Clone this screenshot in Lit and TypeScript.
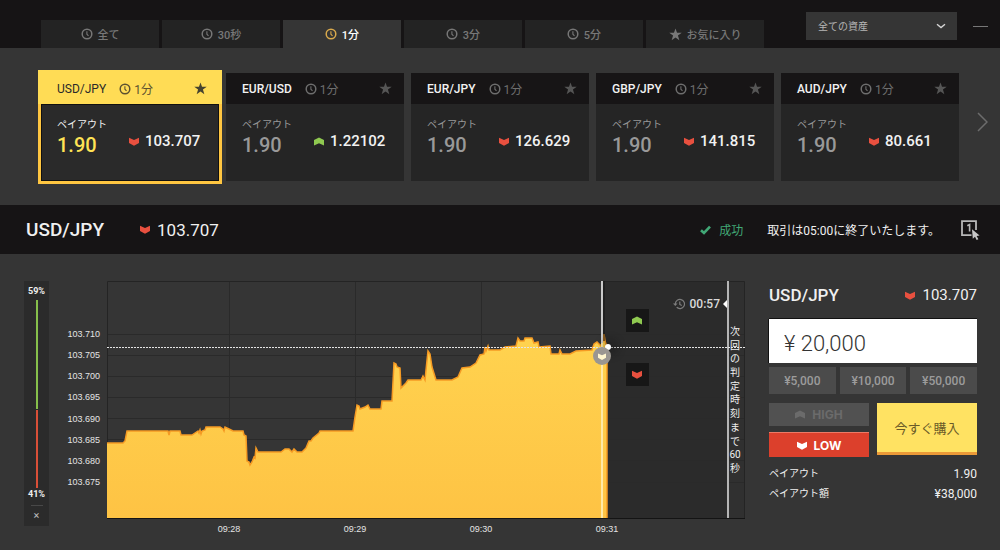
import { LitElement, html, svg, css } from "lit";
import { customElement, property, state } from "lit/decorators.js";
import { classMap } from "lit/directives/class-map.js";

const clockIcon = html`<svg class="clock" viewBox="0 0 12 12" aria-hidden="true">
  <circle cx="6" cy="6" r="4.8" fill="none" stroke="currentColor" stroke-width="1.5" />
  <path d="M5.9 3.2V6.2L7.5 7.9" fill="none" stroke="currentColor" stroke-width="1.1" />
</svg>`;

const starIcon = html`<svg class="star" viewBox="0 0 24 24" aria-hidden="true">
  <path fill="currentColor" d="M12 .8l2.8 8.1h8.7l-7 5.1 2.6 8.4-7.1-5-7.1 5L7.5 14l-7-5.1h8.7z" />
</svg>`;

const arrowIcon = (dir: string) => html`<svg class="arrow ${dir}" viewBox="0 0 10 9" aria-hidden="true">
  <path
    fill="currentColor"
    d=${dir === "up" ? "M0 8.4V3L5 .4l5 2.6v5.4L5 6.2z" : "M0 .8l5 2.2 5-2.2v5.2L5 8.8 0 6z"}
  />
</svg>`;

interface Pair {
  name: string;
  price: string;
  dir: "up" | "down";
}

const PAIRS: Pair[] = [
  { name: "USD/JPY", price: "103.707", dir: "down" },
  { name: "EUR/USD", price: "1.22102", dir: "up" },
  { name: "EUR/JPY", price: "126.629", dir: "down" },
  { name: "GBP/JPY", price: "141.815", dir: "down" },
  { name: "AUD/JPY", price: "80.661", dir: "down" },
];

const TABS = ["全て", "30秒", "1分", "3分", "5分", "お気に入り"];

const shared = css`
  * {
    box-sizing: border-box;
  }
  button,
  input,
  select {
    font: inherit;
    color: inherit;
    border: 0;
    margin: 0;
    padding: 0;
    border-radius: 0;
    background: none;
  }
  .clock {
    width: 12px;
    height: 12px;
    flex: none;
  }
  .star {
    width: 13px;
    height: 13px;
    flex: none;
  }
  .arrow {
    width: 10px;
    height: 9px;
    flex: none;
  }
  .up {
    color: #8fc950;
  }
  .down {
    color: #e8503f;
  }
`;

@customElement("pair-card")
export class PairCard extends LitElement {
  @property({ attribute: false }) pair!: Pair;
  @property({ type: Boolean, reflect: true }) selected = false;

  static styles = [
    shared,
    css`
      :host {
        display: block;
        background: #252525;
        color: #f2f2f2;
      }
      :host([selected]) {
        background: #2a2a2a;
        box-shadow: 0 0 0 3px #ffc641;
      }
      .head {
        display: flex;
        align-items: center;
        height: 31px;
        padding: 0 12px 0 16px;
        background: #171516;
      }
      .name {
        flex: none;
        font-size: 12px;
        font-weight: 500;
      }
      .term {
        display: flex;
        align-items: center;
        gap: 3px;
        margin-left: 13px;
        font-size: 12px;
        color: #6e6e6e;
      }
      .fav {
        display: flex;
        margin-left: auto;
        color: #555;
      }
      .body {
        display: grid;
        grid-template-columns: 72px 1fr;
        height: 77px;
        padding: 14px 16px 0;
      }
      .label {
        font-size: 10px;
        line-height: 14px;
        color: #999;
      }
      .payout {
        font-size: 20px;
        line-height: 26px;
        font-weight: 500;
        color: #999;
      }
      .price {
        display: flex;
        align-items: center;
        gap: 6px;
        height: 46px;
        font-size: 15px;
        font-weight: 500;
      }
      :host([selected]) .head {
        background: #ffdc55;
        box-shadow: 0 -3px #ffdc55, -3px 0 #ffdc55, 3px 0 #ffdc55, -3px -3px #ffdc55, 3px -3px #ffdc55;
        color: #2a2a2a;
      }
      :host([selected]) .name {
        font-weight: 400;
      }
      :host([selected]) .term {
        color: #5c5130;
      }
      :host([selected]) .fav {
        color: #46432f;
      }
      :host([selected]) .body {
        box-shadow: inset 0 0 0 1px #111;
      }
      :host([selected]) .label {
        color: #f2f2f2;
      }
      :host([selected]) .payout {
        color: #ffe355;
      }
    `,
  ];

  render() {
    return html`
      <div class="head">
        <span class="name">${this.pair.name}</span>
        <span class="term">${clockIcon}<span>1分</span></span>
        <button class="fav" aria-label="お気に入り">${starIcon}</button>
      </div>
      <div class="body">
        <div>
          <div class="label">ペイアウト</div>
          <div class="payout">1.90</div>
        </div>
        <div class="price">${arrowIcon(this.pair.dir)}<span>${this.pair.price}</span></div>
      </div>
    `;
  }
}

// Price samples as [x, y] in the plot's 638 x 238 space.
const SERIES: number[][] = [
  [0, 162], [16, 162], [18, 160], [20, 150], [61, 150], [62, 154], [63, 150], [73, 150], [74, 154], [85, 154],
  [91, 150], [92, 152], [93, 149], [94, 153], [95, 150], [98, 149], [99, 146], [113, 146], [116, 148], [117, 150],
  [118, 146], [122, 148], [126, 150], [136, 150], [137, 154], [139, 155], [140, 180], [142, 181], [143, 184],
  [145, 181], [147, 176], [148, 177], [149, 167], [151, 171], [174, 171], [178, 168], [182, 168], [185, 171],
  [187, 168], [190, 171], [195, 171], [199, 167], [202, 160], [204, 160], [206, 157], [212, 152], [213, 150],
  [246, 150], [248, 136], [250, 124], [252, 125], [253, 128], [258, 126], [261, 124], [263, 128], [274, 128],
  [275, 120], [285, 120], [287, 82], [289, 83], [290, 86], [293, 87], [294, 107], [299, 102], [301, 99], [314, 99],
  [316, 95], [318, 99], [319, 89], [321, 70], [323, 73], [325, 86], [329, 99], [345, 99], [351, 96], [355, 87],
  [363, 86], [369, 82], [373, 74], [377, 73], [378, 66], [379, 70], [381, 65], [382, 69], [393, 69], [398, 66],
  [409, 65], [411, 57], [413, 60], [417, 60], [418, 57], [425, 57], [427, 62], [431, 61], [432, 66], [443, 65],
  [444, 73], [452, 73], [453, 69], [455, 73], [463, 73], [469, 70], [485, 69], [487, 63], [490, 61], [494, 65],
  [496, 60], [497, 53], [498, 60], [500, 66],
];

@customElement("price-chart")
export class PriceChart extends LitElement {
  static styles = [
    shared,
    css`
      :host {
        display: grid;
        grid-template-columns: 51px minmax(0, 1fr);
        column-gap: 7px;
        color: #c6c6c6;
      }
      .prices {
        display: flex;
        flex-direction: column;
        justify-content: space-between;
        height: 160px;
        margin-top: 47px;
        text-align: right;
        font: 9px/12px "Liberation Sans", Arial, sans-serif;
        color: #e4e4e4;
      }
      .plot {
        position: relative;
        height: 238px;
      }
      .canvas {
        display: block;
        width: 100%;
        height: 100%;
      }
      .times {
        grid-column: 2;
        display: grid;
        grid-template-columns: repeat(4, 1fr);
        width: 79%;
        margin: 4px 0 0 9.25%;
        text-align: center;
        font: 9px/12px "Liberation Sans", Arial, sans-serif;
        color: #e4e4e4;
      }
      .rate {
        position: absolute;
        top: 66px;
        left: 0;
        right: 0;
        height: 1px;
        background: repeating-linear-gradient(90deg, #e4e4e4 0 2px, transparent 2px 3px);
      }
      .dot {
        position: absolute;
        top: 63px;
        left: 78.5%;
        width: 6px;
        height: 6px;
        margin-left: -3px;
        border-radius: 50%;
        background: #fff;
        box-shadow: 2px 0 8px 4px #1116;
      }
      .entry {
        position: absolute;
        top: 66px;
        left: 77.6%;
        display: grid;
        place-items: center;
        width: 18px;
        height: 18px;
        margin-left: -9px;
        border-radius: 50%;
        background: #9a9691;
      }
      .entry .arrow {
        color: #fff6cf;
        width: 8px;
      }
      .trade {
        position: absolute;
        left: 81.3%;
        display: grid;
        place-items: center;
        width: 23px;
        height: 23px;
        background: #171717;
      }
      .trade.high {
        top: 28px;
      }
      .trade.low {
        top: 82px;
      }
      .countdown {
        position: absolute;
        top: 15px;
        right: 18px;
        display: flex;
        align-items: center;
        font-size: 12px;
        line-height: 16px;
        font-weight: 500;
        color: #dadada;
      }
      .history {
        width: 12px;
        height: 12px;
        margin-right: 5px;
      }
      .tip {
        margin-left: 3px;
        border: 4px solid transparent;
        border-left-width: 0;
        border-right-color: #fff;
      }
      .deadline {
        position: absolute;
        top: 44px;
        right: 3px;
        display: flex;
        flex-direction: column;
        align-items: center;
        justify-content: space-between;
        width: 14px;
        height: 150px;
        font-size: 10px;
        line-height: 13px;
        color: #eee;
      }
    `,
  ];

  render() {
    const line = SERIES.map(([x, y]) => `${x} ${y}`).join("L");
    const rows = [53, 74, 95, 116, 137, 158, 179, 201];
    return html`
      <div class="prices">
        ${["103.710", "103.705", "103.700", "103.695", "103.690", "103.685", "103.680", "103.675"].map(
          (p) => html`<span>${p}</span>`
        )}
      </div>
      <div class="plot">
        <svg class="canvas" viewBox="0 0 638 238" preserveAspectRatio="none" role="img" aria-label="USD/JPY">
          <defs>
            <linearGradient id="fill" x1="0" y1="0" x2="0" y2="1">
              <stop offset="0" stop-color="#ffd34f" />
              <stop offset="1" stop-color="#fec344" />
            </linearGradient>
          </defs>
          <rect x="495" y="0" width="126" height="238" fill="#2b2b2b" />
          <rect x="621" y="0" width="17" height="238" fill="#303030" />
          ${rows.map((y) => svg`<path d="M0 ${y + 0.5}H638" stroke="#2a2a2a" />`)}
          ${[122, 248, 374].map((x) => svg`<path d="M${x + 0.5} 0V238" stroke="#2a2a2a" />`)}
          <path d="M.5 238V.5H637.5V238" fill="none" stroke="#242424" />
          <path d="M0 237L${line}L500 237Z" fill="url(#fill)" />
          <path d="M${line}L500 237" fill="none" stroke="#f59a23" stroke-width="1.5" />
          <path d="M495 0V237" stroke="#c9c9c9" stroke-width="2" />
          <path d="M495 62V237" stroke="#ffe9a6" stroke-width="2" />
          <path d="M497 0V60" stroke="#141414" />
          <path d="M621 0V237" stroke="#b5b5b5" stroke-width="2" />
          <path d="M0 237.5H638" stroke="#141414" />
        </svg>
        <div class="rate"></div>
        <div class="dot"></div>
        <div class="entry">${arrowIcon("down")}</div>
        <button class="trade high" aria-label="HIGH">${arrowIcon("up")}</button>
        <button class="trade low" aria-label="LOW">${arrowIcon("down")}</button>
        <div class="countdown">
          <svg class="history" viewBox="0 0 12 12" aria-hidden="true">
            <path
              d="M2.3 6A4.6 4.6 0 1 1 3.7 9.3M6.8 3.6V6.4L8.8 7.6"
              fill="none"
              stroke="#7d7d7d"
              stroke-width="1.2"
            />
            <path d="M0 5.4H4.6L2.3 8Z" fill="#7d7d7d" />
          </svg>
          <span>00:57</span><i class="tip"></i>
        </div>
        <div class="deadline">
          ${["次", "回", "の", "判", "定", "時", "刻", "ま", "で", "60", "秒"].map((c) => html`<span>${c}</span>`)}
        </div>
      </div>
      <div class="times">${["09:28", "09:29", "09:30", "09:31"].map((t) => html`<span>${t}</span>`)}</div>
    `;
  }
}

@customElement("order-panel")
export class OrderPanel extends LitElement {
  @state() private amount = "¥ 20,000";

  static styles = [
    shared,
    css`
      :host {
        display: block;
        color: #f0f0f0;
      }
      .title {
        display: flex;
        align-items: center;
        height: 28px;
        margin-bottom: 10px;
        font-size: 15px;
      }
      .pair {
        margin-right: auto;
        font-size: 17px;
        font-weight: 500;
      }
      .title .arrow {
        margin-right: 7px;
      }
      .amount {
        display: block;
        width: 100%;
        height: 44px;
        padding: 4px 15px 0;
        background: #fff;
        box-shadow: 0 -1px #111, -1px 0 #111;
        font-size: 22px;
        font-weight: 300;
        color: #333;
      }
      .presets {
        display: grid;
        grid-template-columns: repeat(3, 1fr);
        gap: 4px;
        margin-top: 4px;
      }
      .preset {
        height: 27px;
        background: #4b4b4b;
        font-size: 12px;
        font-weight: 500;
        color: #9c9c9c;
      }
      .actions {
        display: grid;
        grid-template-columns: 1fr 1fr;
        gap: 8px;
        margin-top: 9px;
      }
      .sides {
        display: grid;
        gap: 6px;
      }
      .side {
        display: flex;
        align-items: center;
        justify-content: center;
        gap: 7px;
        height: 23px;
        background: #515151;
        font: 700 12px Inter, sans-serif;
        color: #6b6b6b;
      }
      .side .arrow {
        color: inherit;
      }
      .side.on {
        height: 25px;
        padding-top: 2px;
        background: #dc402c;
        box-shadow: inset 0 1px #ec7a66;
        color: #fff;
      }
      .buy {
        height: 52px;
        background: #ffe262;
        border-bottom: 3px solid #eb9a38;
        font-size: 13px;
        color: #6a5a28;
      }
      .facts {
        margin: 7px 0 0;
        font-size: 12px;
        line-height: 20px;
      }
      .fact {
        display: flex;
        justify-content: space-between;
      }
      .term {
        font-size: 10px;
      }
      .value {
        margin: 0;
      }
    `,
  ];

  render() {
    return html`
      <div class="title"><span class="pair">USD/JPY</span>${arrowIcon("down")}<span>103.707</span></div>
      <input class="amount" aria-label="金額" .value=${this.amount} />
      <div class="presets">
        ${["5,000", "10,000", "50,000"].map(
          (v) => html`<button class="preset" @click=${() => (this.amount = `¥ ${v}`)}>¥${v}</button>`
        )}
      </div>
      <div class="actions">
        <div class="sides">
          <button class="side">${arrowIcon("up")}HIGH</button>
          <button class="side on">${arrowIcon("down")}LOW</button>
        </div>
        <button class="buy">今すぐ購入</button>
      </div>
      <dl class="facts">
        <div class="fact"><dt class="term">ペイアウト</dt><dd class="value">1.90</dd></div>
        <div class="fact"><dt class="term">ペイアウト額</dt><dd class="value">¥38,000</dd></div>
      </dl>
    `;
  }
}

@customElement("app-root")
export class AppRoot extends LitElement {
  @state() private tab = 2;
  @state() private selected = 0;

  static styles = [
    shared,
    css`
      :host {
        display: flex;
        flex-direction: column;
        min-height: 100vh;
        background: #353535;
        color: #f0f0f0;
        font-family: Roboto, "Noto Sans CJK JP", sans-serif;
        font-size: 12px;
      }
      .top {
        display: flex;
        align-items: flex-end;
        height: 48px;
        padding: 0 12px 0 41px;
        background: #161415;
      }
      .tabs {
        flex: 1;
        display: grid;
        grid-template-columns: repeat(6, 1fr);
        gap: 3px;
      }
      .tab {
        display: flex;
        align-items: center;
        justify-content: center;
        gap: 5px;
        height: 28px;
        background: #232323;
        font-size: 11px;
        font-weight: 500;
        color: #777;
      }
      .tab.on {
        background: #353535;
        color: #fff;
      }
      .tab.on .clock {
        color: #d9a94c;
      }
      .filter {
        position: relative;
        width: 151px;
        height: 28px;
        margin: 0 16px 8px 42px;
      }
      .assets {
        appearance: none;
        width: 100%;
        height: 100%;
        padding: 0 12px;
        background: #353535;
        font-size: 10px;
        color: #b5b5b5;
      }
      .caret {
        position: absolute;
        right: 11px;
        top: 11px;
        width: 10px;
        height: 6px;
        pointer-events: none;
      }
      .collapse {
        display: grid;
        place-items: center;
        width: 15px;
        height: 28px;
        margin-bottom: 8px;
      }
      .dash {
        width: 15px;
        height: 1px;
        background: #777;
      }
      .cards {
        display: flex;
        align-items: center;
        padding: 25px 12px 24px 41px;
      }
      .list {
        flex: 1;
        display: grid;
        grid-template-columns: repeat(5, 1fr);
        gap: 7px;
      }
      .next {
        width: 11px;
        height: 20px;
        margin: 0 0 10px 18px;
      }
      .next svg {
        display: block;
        width: 11px;
        height: 20px;
      }
      .bar {
        display: flex;
        align-items: center;
        height: 49px;
        padding: 0 20px 0 26px;
        background: #161415;
      }
      .pair {
        margin: 0;
        font-size: 19px;
        font-weight: 500;
      }
      .rate {
        display: flex;
        align-items: center;
        gap: 7px;
        margin-left: 36px;
        font-size: 17px;
      }
      .status {
        display: flex;
        align-items: center;
        gap: 8px;
        margin-left: auto;
        color: #41a876;
      }
      .check {
        width: 11px;
        height: 10px;
      }
      .notice {
        margin: 0 20px 0 24px;
      }
      .oneclick {
        width: 20px;
        height: 20px;
      }
      .oneclick svg {
        display: block;
        width: 20px;
        height: 20px;
      }
      .main {
        flex: 1;
        display: grid;
        grid-template-columns: 25px minmax(0, 1fr) 208px;
        align-items: start;
        padding: 27px 23px 4px 24px;
      }
      .gauge {
        display: flex;
        flex-direction: column;
        align-items: center;
        height: 245px;
        background: #2b2b2b;
        font-size: 9px;
        line-height: 13px;
        font-weight: 700;
      }
      .share {
        margin: 4px 0 2px;
      }
      .track {
        flex: 1;
        display: flex;
        flex-direction: column;
        gap: 1px;
        width: 2px;
      }
      .high {
        background: #86bf4b;
      }
      .low {
        flex: 1;
        background: #d94f38;
      }
      .close {
        width: 12px;
        padding: 4px 0;
        border-top: 1px solid #484848;
        margin-top: 4px;
        font-size: 11px;
        line-height: 12px;
        font-weight: 400;
        color: #bbb;
      }
      price-chart {
        margin-right: 24px;
      }
    `,
  ];

  render() {
    return html`
      <header class="top">
        <nav class="tabs">
          ${TABS.map(
            (t, i) => html`<button
              class=${classMap({ tab: true, on: i === this.tab })}
              @click=${() => (this.tab = i)}
            >
              ${i === 5 ? starIcon : clockIcon}<span>${t}</span>
            </button>`
          )}
        </nav>
        <div class="filter">
          <select class="assets" aria-label="資産">
            <option>全ての資産</option>
          </select>
          <svg class="caret" viewBox="0 0 10 6" aria-hidden="true">
            <path d="M1 1.2L5 4.6 9 1.2" fill="none" stroke="#d5d5d5" stroke-width="1.4" />
          </svg>
        </div>
        <button class="collapse" aria-label="最小化"><i class="dash"></i></button>
      </header>
      <section class="cards">
        <div class="list">
          ${PAIRS.map(
            (p, i) => html`<pair-card
              .pair=${p}
              ?selected=${i === this.selected}
              @click=${() => (this.selected = i)}
            ></pair-card>`
          )}
        </div>
        <button class="next" aria-label="次へ">
          <svg viewBox="0 0 11 20"><path d="M1 1L10 10 1 19" fill="none" stroke="#6c6c6c" stroke-width="1.5" /></svg>
        </button>
      </section>
      <section class="bar">
        <h1 class="pair">USD/JPY</h1>
        <div class="rate">${arrowIcon("down")}<span>103.707</span></div>
        <div class="status">
          <svg class="check" viewBox="0 0 11 10" aria-hidden="true">
            <path d="M1 5.2L4 8 10 1.6" fill="none" stroke="currentColor" stroke-width="2.6" />
          </svg>
          <span>成功</span>
        </div>
        <div class="notice">取引は05:00に終了いたします。</div>
        <button class="oneclick" aria-label="ワンクリック">
          <svg viewBox="0 0 20 20">
            <path d="M11.5 15.2H2V1.2H16V10" fill="none" stroke="#b8b8b8" stroke-width="1.8" />
            <path d="M7.3 5.8L9.6 4.6V11.6" fill="none" stroke="#b8b8b8" stroke-width="1.6" />
            <path d="M12 9.2L19.6 15.4 16.6 15.9 18.4 19.2 16.6 20 15 16.8 12.8 18.8Z" fill="#c8c8c8" />
          </svg>
        </button>
      </section>
      <main class="main">
        <aside class="gauge">
          <span class="share">59%</span>
          <div class="track">
            <div class="high" style="height:58%"></div>
            <div class="low"></div>
          </div>
          <span>41%</span>
          <button class="close" aria-label="閉じる">×</button>
        </aside>
        <price-chart></price-chart>
        <order-panel></order-panel>
      </main>
    `;
  }
}
